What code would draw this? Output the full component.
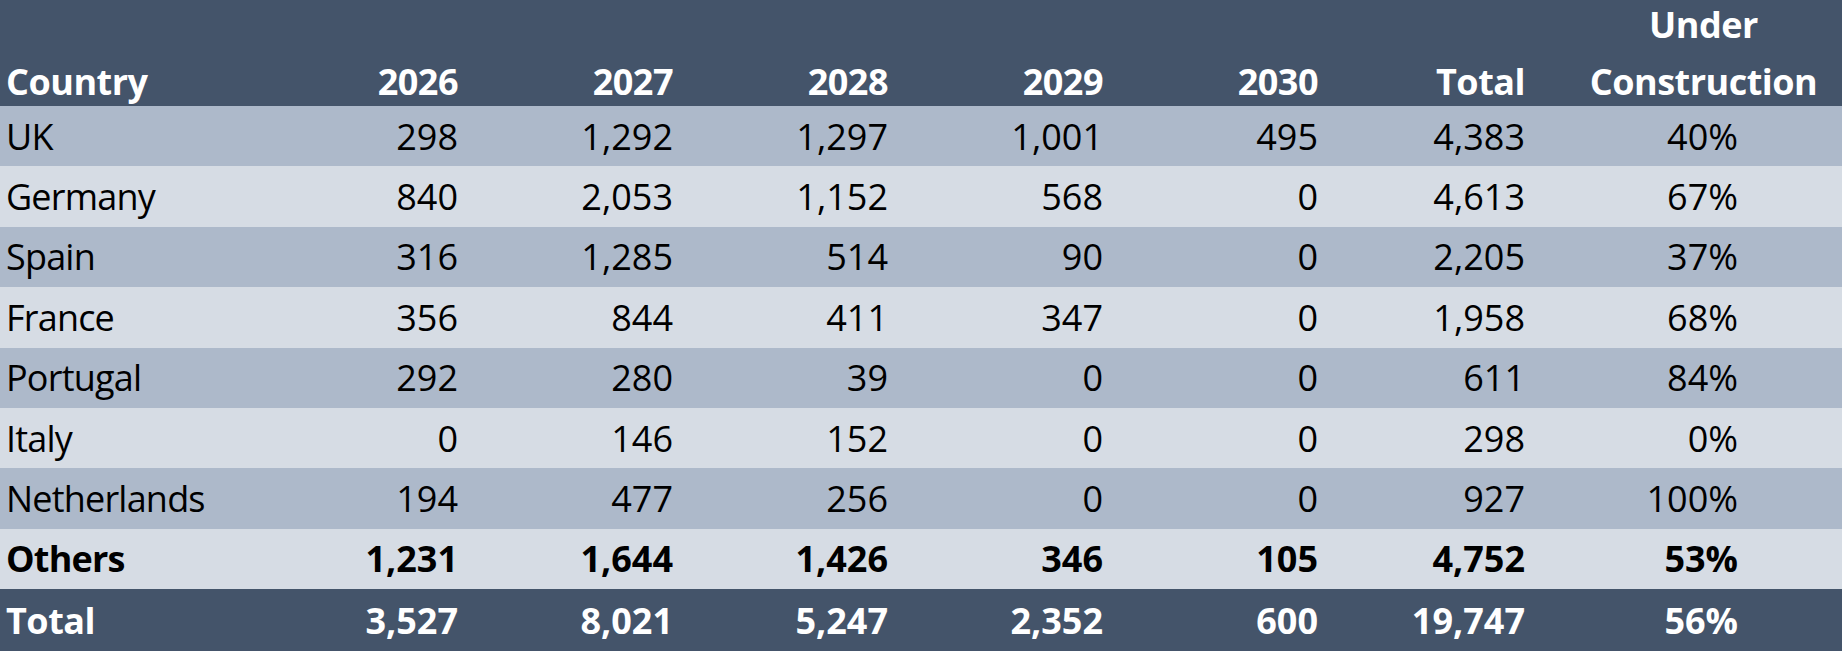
import React from 'react';

const years = ['2026', '2027', '2028', '2029', '2030'];

const rows = [
  { country: 'UK', values: ['298', '1,292', '1,297', '1,001', '495'], total: '4,383', uc: '40%' },
  { country: 'Germany', values: ['840', '2,053', '1,152', '568', '0'], total: '4,613', uc: '67%' },
  { country: 'Spain', values: ['316', '1,285', '514', '90', '0'], total: '2,205', uc: '37%' },
  { country: 'France', values: ['356', '844', '411', '347', '0'], total: '1,958', uc: '68%' },
  { country: 'Portugal', values: ['292', '280', '39', '0', '0'], total: '611', uc: '84%' },
  { country: 'Italy', values: ['0', '146', '152', '0', '0'], total: '298', uc: '0%' },
  { country: 'Netherlands', values: ['194', '477', '256', '0', '0'], total: '927', uc: '100%' },
  { country: 'Others', values: ['1,231', '1,644', '1,426', '346', '105'], total: '4,752', uc: '53%', bold: true },
];

const totals = { country: 'Total', values: ['3,527', '8,021', '5,247', '2,352', '600'], total: '19,747', uc: '56%' };

const cols = 'grid grid-cols-[244px_214px_215px_215px_215px_215px_207px_1fr]';

const DataRow = ({ row, className }) => (
  <div className={`${cols} h-[60.4px] items-center leading-[49px] ${className}`}>
    <div className="pl-[6px] tracking-[-0.8px]">{row.country}</div>
    {row.values.map((v, i) => (
      <div key={i} className="text-right">{v}</div>
    ))}
    <div className="text-right">{row.total}</div>
    <div className="text-right pr-[104px]">{row.uc}</div>
  </div>
);

export default function App() {
  return (
    <div className="w-[1842px] h-[651px] overflow-hidden text-[36px] text-black font-['Open_Sans',sans-serif]">
      {/* header */}
      <div className={`${cols} h-[106px] items-end bg-[#44546a] text-white font-bold leading-[48px] tracking-[-0.5px]`}>
        <div className="pl-[6px]">Country</div>
        {years.map((y) => (
          <div key={y} className="text-right">{y}</div>
        ))}
        <div className="text-right">Total</div>
        <div className="text-center pl-[40px]">
          <div className="leading-[49px] mb-[9px]">Under</div>
          <div>Construction</div>
        </div>
      </div>

      {rows.map((row, i) => (
        <DataRow
          key={row.country}
          row={row}
          className={`${i % 2 === 0 ? 'bg-[#adb9ca]' : 'bg-[#d6dce4]'} ${row.bold ? 'font-bold' : ''}`}
        />
      ))}

      <div className={`${cols} h-[62px] items-center leading-[49px] bg-[#44546a] text-white font-bold`}>
        <div className="pl-[6px] tracking-[-0.5px]">{totals.country}</div>
        {totals.values.map((v, i) => (
          <div key={i} className="text-right">{v}</div>
        ))}
        <div className="text-right">{totals.total}</div>
        <div className="text-right pr-[104px]">{totals.uc}</div>
      </div>
    </div>
  );
}
